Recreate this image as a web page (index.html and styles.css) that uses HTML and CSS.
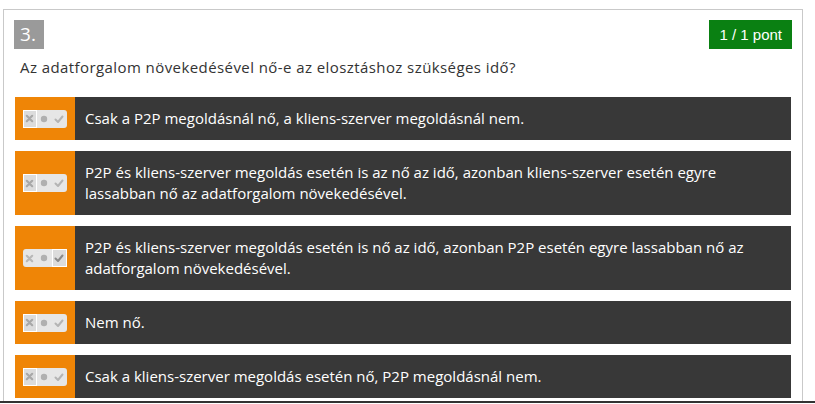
FILE: index.html
```html
<!DOCTYPE html>
<html lang="hu">
<head>
<meta charset="utf-8">
<link rel="stylesheet" href="styles.css">
</head>
<body>
<div class="viewport">
  <div class="card">
    <div class="head">
      <div class="num">3.</div>
      <div class="score">1 / 1 pont</div>
    </div>
    <div class="question">Az adatforgalom növekedésével nő-e az elosztáshoz szükséges idő?</div>
    <div class="options">
      <div class="opt">
        <div class="side"><span class="tri sel-x">
          <span class="cell c-x"><svg viewBox="0 0 10 10" width="9" height="9"><path d="M2 2 L8 8 M8 2 L2 8" stroke="#a8a8a8" stroke-width="2.4" stroke-linecap="round"/></svg></span>
          <span class="cell c-o"><svg viewBox="0 0 10 10" width="8" height="8"><circle cx="5" cy="5" r="4" fill="#b0b0b0"/></svg></span>
          <span class="cell c-v"><svg viewBox="0 0 10 10" width="10" height="10"><path d="M1.5 5.5 L4 8 L8.5 2.5" stroke="#b4b4b4" stroke-width="2" fill="none" stroke-linecap="round" stroke-linejoin="round"/></svg></span>
        </span></div>
        <div class="txt">Csak a P2P megoldásnál nő, a kliens-szerver megoldásnál nem.</div>
      </div>
      <div class="opt">
        <div class="side"><span class="tri sel-x">
          <span class="cell c-x"><svg viewBox="0 0 10 10" width="9" height="9"><path d="M2 2 L8 8 M8 2 L2 8" stroke="#a8a8a8" stroke-width="2.4" stroke-linecap="round"/></svg></span>
          <span class="cell c-o"><svg viewBox="0 0 10 10" width="8" height="8"><circle cx="5" cy="5" r="4" fill="#b0b0b0"/></svg></span>
          <span class="cell c-v"><svg viewBox="0 0 10 10" width="10" height="10"><path d="M1.5 5.5 L4 8 L8.5 2.5" stroke="#b4b4b4" stroke-width="2" fill="none" stroke-linecap="round" stroke-linejoin="round"/></svg></span>
        </span></div>
        <div class="txt">P2P és kliens-szerver megoldás esetén is az nő az idő, azonban kliens-szerver esetén egyre lassabban nő az adatforgalom növekedésével.</div>
      </div>
      <div class="opt">
        <div class="side"><span class="tri sel-v">
          <span class="cell c-x"><svg viewBox="0 0 10 10" width="9" height="9"><path d="M2 2 L8 8 M8 2 L2 8" stroke="#b8b8b8" stroke-width="2.4" stroke-linecap="round"/></svg></span>
          <span class="cell c-o"><svg viewBox="0 0 10 10" width="8" height="8"><circle cx="5" cy="5" r="4" fill="#b0b0b0"/></svg></span>
          <span class="cell c-v"><svg viewBox="0 0 10 10" width="10" height="10"><path d="M1.5 5.5 L4 8 L8.5 2.5" stroke="#8a8a8a" stroke-width="2" fill="none" stroke-linecap="round" stroke-linejoin="round"/></svg></span>
        </span></div>
        <div class="txt">P2P és kliens-szerver megoldás esetén is nő az idő, azonban P2P esetén egyre lassabban nő az adatforgalom növekedésével.</div>
      </div>
      <div class="opt">
        <div class="side"><span class="tri sel-x">
          <span class="cell c-x"><svg viewBox="0 0 10 10" width="9" height="9"><path d="M2 2 L8 8 M8 2 L2 8" stroke="#a8a8a8" stroke-width="2.4" stroke-linecap="round"/></svg></span>
          <span class="cell c-o"><svg viewBox="0 0 10 10" width="8" height="8"><circle cx="5" cy="5" r="4" fill="#b0b0b0"/></svg></span>
          <span class="cell c-v"><svg viewBox="0 0 10 10" width="10" height="10"><path d="M1.5 5.5 L4 8 L8.5 2.5" stroke="#b4b4b4" stroke-width="2" fill="none" stroke-linecap="round" stroke-linejoin="round"/></svg></span>
        </span></div>
        <div class="txt">Nem nő.</div>
      </div>
      <div class="opt">
        <div class="side"><span class="tri sel-x">
          <span class="cell c-x"><svg viewBox="0 0 10 10" width="9" height="9"><path d="M2 2 L8 8 M8 2 L2 8" stroke="#a8a8a8" stroke-width="2.4" stroke-linecap="round"/></svg></span>
          <span class="cell c-o"><svg viewBox="0 0 10 10" width="8" height="8"><circle cx="5" cy="5" r="4" fill="#b0b0b0"/></svg></span>
          <span class="cell c-v"><svg viewBox="0 0 10 10" width="10" height="10"><path d="M1.5 5.5 L4 8 L8.5 2.5" stroke="#b4b4b4" stroke-width="2" fill="none" stroke-linecap="round" stroke-linejoin="round"/></svg></span>
        </span></div>
        <div class="txt">Csak a kliens-szerver megoldás esetén nő, P2P megoldásnál nem.</div>
      </div>
    </div>
  </div>
</div>
<div class="bottom-line"></div>
</body>
</html>
```

FILE: styles.css
```css
html, body {
  margin: 0;
  padding: 0;
  background: #fff;
}
body {
  font-family: "Open Sans", "DejaVu Sans", sans-serif;
  width: 815px;
  height: 404px;
  overflow: hidden;
}
.viewport {
  height: 401px;
  overflow: hidden;
  padding: 9px 0 0 3px;
  box-sizing: border-box;
}
.card {
  width: 800px;
  box-sizing: border-box;
  border: 1px solid #c9c9c9;
  padding: 10px 10px 20px 11px;
  min-height: 420px;
}
.head {
  display: flex;
  justify-content: space-between;
  align-items: flex-start;
  margin-left: -1px;
}
.num {
  width: 30px;
  height: 29px;
  background: #9a9a9a;
  color: #fff;
  font-size: 19px;
  line-height: 29px;
  text-align: center;
  box-sizing: border-box;
  padding-right: 2px;
}
.score {
  background: #0a8012;
  color: #fff;
  font-family: "Liberation Sans", Arial, sans-serif;
  font-size: 15px;
  height: 29px;
  line-height: 29px;
  padding: 0 10px 0 10px;
}
.question {
  font-size: 15px;
  color: #333;
  line-height: 20px;
  margin: 8px 0 0 5px;
  letter-spacing: 0.42px;
}
.options {
  margin-top: 20px;
  display: flex;
  flex-direction: column;
  gap: 11px;
  width: 776px;
}
.opt {
  display: flex;
  background: #383838;
}
.side {
  width: 60px;
  flex: none;
  background: #ef8506;
  display: flex;
  align-items: center;
  justify-content: center;
}
.tri {
  display: flex;
  width: 44px;
  height: 18px;
  background: #e6e6e6;
  border-radius: 3px;
  box-sizing: border-box;
  margin-right: 1px;
}
.cell {
  display: flex;
  align-items: center;
  justify-content: center;
  box-sizing: border-box;
}
.c-x { flex: 0 0 14px; }
.c-o { flex: 1; }
.c-v { flex: 0 0 15px; }
.sel-x .c-x { border: 1px solid #fff; background: #dcdcdc; }
.sel-v .c-v { border: 1px solid #fff; background: #dcdcdc; }
.txt {
  flex: 1;
  color: #fff;
  font-size: 15px;
  line-height: 21px;
  padding: 11px 40px 11px 10px;
}
.bottom-line {
  height: 2px;
  background: #333;
}
```
